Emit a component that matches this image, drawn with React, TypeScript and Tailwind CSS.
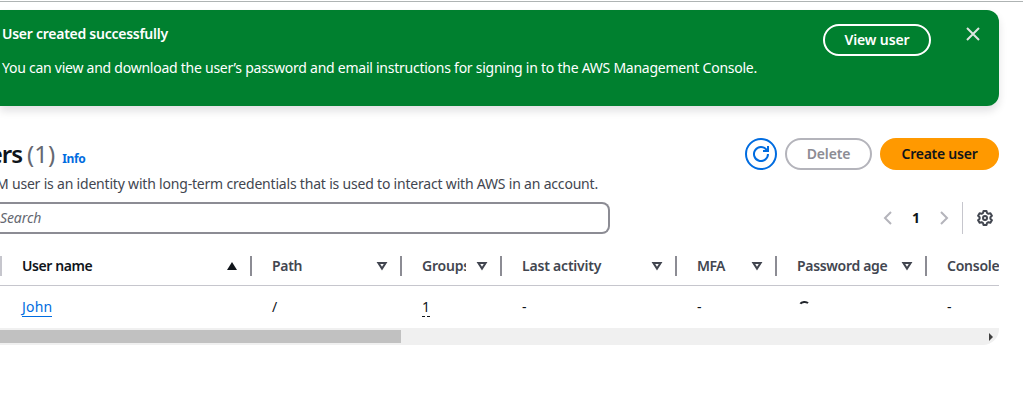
type Sort = 'asc' | 'none' | 'hidden';

type Column = {
  id: string;
  label: string;
  width: string;
  labelClass: string;
  sort: Sort;
};

const columns: Column[] = [
  { id: 'name', label: 'User name', width: 'w-[250px]', labelClass: 'tracking-[-0.42px] text-[#0f141a]', sort: 'asc' },
  { id: 'path', label: 'Path', width: 'w-[150px]', labelClass: 'tracking-[-0.3px]', sort: 'none' },
  { id: 'groups', label: 'Groups', width: 'w-[100px]', labelClass: 'tracking-[-0.2px]', sort: 'none' },
  { id: 'activity', label: 'Last activity', width: 'w-[175px]', labelClass: 'tracking-[-0.2px]', sort: 'none' },
  { id: 'mfa', label: 'MFA', width: 'w-[100px]', labelClass: 'tracking-[-0.6px]', sort: 'none' },
  { id: 'age', label: 'Password age', width: 'w-[150px]', labelClass: 'tracking-[-0.32px]', sort: 'none' },
  { id: 'console', label: 'Console', width: 'w-[72px]', labelClass: 'tracking-[-0.25px]', sort: 'hidden' },
];

function SortIcon({ sort }: { sort: Sort }) {
  return (
    <svg viewBox="0 0 16 16" className="h-4 w-4 shrink-0">
      {sort === 'asc' ? (
        <path d="M3 12h10L8 4z" fill="#0f141a" />
      ) : (
        <path d="M4.4 5h7.2L8 10.6z" fill="none" stroke="#424650" strokeWidth="2" />
      )}
    </svg>
  );
}

function Banner() {
  return (
    <div className="mt-2 flex h-24 w-[999px] rounded-r-xl bg-[#00802f] text-white shadow-[0_5px_9px_rgba(0,7,22,0.12)]">
      <div className="flex-1 whitespace-nowrap pl-0.5 pt-3.5 leading-5">
        <p className="font-semibold tracking-[-0.26px]">User created successfully</p>
        <p className="mt-3.5 tracking-[-0.25px]">
          You can view and download the user’s password and email instructions for signing in to the AWS Management Console.
        </p>
      </div>
      <button className="mr-[34px] mt-3.5 flex h-8 w-[108px] items-center justify-center rounded-full border-2 border-white font-semibold tracking-[-0.1px]">
        View user
      </button>
      <svg viewBox="0 0 16 16" className="mr-[18px] mt-4 h-4 w-4" fill="none" stroke="#dfe5e1" strokeWidth="2">
        <path d="m2 2 12 12M14 2 2 14" />
      </svg>
    </div>
  );
}

function Header() {
  return (
    <div className="mt-8 flex h-8 w-[999px] items-center">
      <div className="flex flex-1 items-baseline">
        <h1 className="flex w-[21px] justify-end text-2xl leading-8 text-[#0f141a]">
          <span className="mr-[-1px] font-semibold tracking-[-1px]">Users</span>
        </h1>
        <span className="ml-[6px] text-2xl leading-8 text-[#656871]">(1)</span>
        <a className="ml-[7px] text-xs font-bold tracking-[-0.35px] text-[#006ce0]">Info</a>
      </div>
      <div className="flex gap-2 font-semibold">
        <button className="flex h-8 w-8 items-center justify-center rounded-full border-2 border-[#006ce0]">
          <svg viewBox="0 0 16 16" className="h-4 w-4" fill="none" stroke="#006ce0" strokeWidth="2">
            <path d="M15 8a7 7 0 1 1-1.5-4.3L15 5.2M15 0v5h-5" />
          </svg>
        </button>
        <button className="flex h-8 w-[87px] items-center justify-center rounded-full border-2 border-[#b4b4bb] tracking-[-0.15px] text-[#8c8c94]">
          Delete
        </button>
        <button className="flex h-8 w-[119px] items-center justify-center rounded-full bg-[#ff9900] tracking-[-0.25px] text-[#0f141a]">
          Create user
        </button>
      </div>
    </div>
  );
}

function Toolbar() {
  return (
    <div className="mt-2 flex h-8 w-[999px] items-center">
      <div className="flex h-8 w-[610px] items-center rounded-r-lg border-2 border-l-0 border-[#8c8c94] italic tracking-[-0.1px] text-[#656871]">
        Search
      </div>
      <div className="ml-auto flex h-8 items-center">
        <svg viewBox="0 0 16 16" className="h-4 w-4" fill="none" stroke="#b4b4bb" strokeWidth="2">
          <path d="M11 2 5 8l6 6" />
        </svg>
        <span className="w-10 text-center font-bold text-[#0f141a]">1</span>
        <svg viewBox="0 0 16 16" className="h-4 w-4" fill="none" stroke="#b4b4bb" strokeWidth="2">
          <path d="m5 2 6 6-6 6" />
        </svg>
        <div className="ml-[10px] h-8 w-px bg-[#c6c6cd]" />
        <svg viewBox="0 0 16 16" className="ml-3.5 mr-1.5 h-4 w-4" fill="none" stroke="#424650" strokeWidth="2" strokeLinejoin="round">
          <path d="M6.5 1h3l.5 2 1.4.8 2-.6 1.5 2.6L13.4 7.2v1.6l1.5 1.4-1.5 2.6-2-.6L10 13l-.5 2h-3L6 13l-1.4-.8-2 .6-1.5-2.6 1.5-1.4V7.2L1.1 5.8l1.5-2.6 2 .6L6 3z" />
          <circle cx="8" cy="8" r="2" />
        </svg>
      </div>
    </div>
  );
}

function Table() {
  return (
    <div className="mt-[22px] w-[999px] overflow-hidden rounded-br-2xl">
      <div className="flex h-[30px] border-b border-[#c6c6cd] font-semibold text-[#424650]">
        <div className="h-5 w-0.5 shrink-0 bg-[#c6c6cd]" />
        {columns.map((c) => (
          <div key={c.id} className={`${c.width} flex h-5 shrink-0 items-center pl-5`}>
            <span className={`${c.labelClass} min-w-0 flex-1 overflow-hidden whitespace-nowrap leading-5`}>{c.label}</span>
            {c.sort !== 'hidden' && (
              <>
                <div className="ml-2 mr-[10px] flex">
                  <SortIcon sort={c.sort} />
                </div>
                <div className="h-5 w-0.5 bg-[#8c8c94]" />
              </>
            )}
          </div>
        ))}
      </div>
      <div className="flex h-[42px] items-center pl-0.5 text-[#0f141a]">
        <div className="w-[250px] pl-5">
          <a className="inline-block h-5 border-b border-[#006ce0] leading-5 tracking-[0.2px] text-[#006ce0]">John</a>
        </div>
        <div className="w-[150px] pl-5">/</div>
        <div className="w-[100px] pl-5">
          <span className="inline-block h-[19px] border-b border-dashed border-[#0f141a] leading-[18px]">1</span>
        </div>
        <div className="w-[175px] pl-5">-</div>
        <div className="w-[100px] pl-5">-</div>
        <div className="w-[150px] pl-5">
          <svg viewBox="0 0 12 20" className="h-5 w-3" fill="none" stroke="#22262c" strokeWidth="2">
            <path d="M3.4 6.8C4.5 4.7 9.2 4.2 11 6.1" />
          </svg>
        </div>
        <div className="w-[72px] pl-5">-</div>
      </div>
      <div className="flex h-[17px] items-center justify-between bg-[#f0f0f0]">
        <div className="h-[13px] w-[401px] bg-[#c1c1c1]" />
        <svg viewBox="0 0 4 8" className="mr-[6px] h-2 w-1" fill="#404040">
          <path d="M0 0v8l4-4z" />
        </svg>
      </div>
    </div>
  );
}

export default function App() {
  return (
    <div className="h-[417px] w-full overflow-hidden bg-white pt-px font-['Noto_Sans','Open_Sans',sans-serif] text-sm">
      <div className="h-px bg-[#aeb3b3]" />
      <Banner />
      <Header />
      <p className="mt-1 flex h-5 w-[598px] justify-end whitespace-nowrap leading-5 tracking-[-0.195px] text-[#424650]">
        An IAM user is an identity with long-term credentials that is used to interact with AWS in an account.
      </p>
      <Toolbar />
      <Table />
    </div>
  );
}
